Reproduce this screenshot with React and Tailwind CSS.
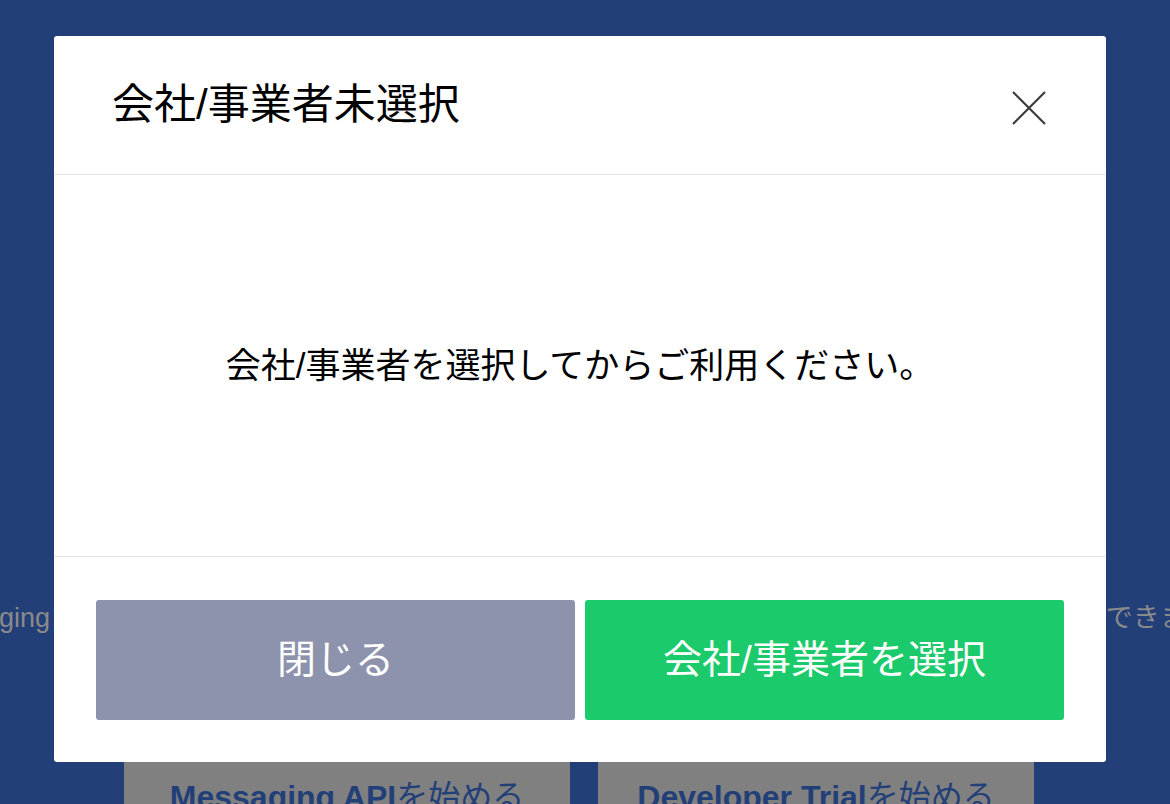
import React from 'react'

const FONT = { fontFamily: '"Liberation Sans", "Noto Sans CJK JP", sans-serif' }

export default function App(){
  return (
    <div className="relative w-[1170px] h-[804px] overflow-hidden bg-[#233f78]" style={FONT}>
      {/* page behind the overlay */}
      <div className="pt-[596px]">
        <div className="flex items-center justify-between whitespace-nowrap text-[27px] leading-[45px] text-[#8a8a8a]">
          <span className="-ml-[1px]">ging</span>
          <span className="shrink-0 -mr-[68px]">できます。</span>
        </div>
        <div className="mt-[99px] flex">
          <div className="ml-[124px] w-[446px] h-[100px] bg-[#808080] pt-[35px] text-center text-[32px] leading-[45px] font-bold text-[#233f78] whitespace-nowrap">
            Messaging API<span className="font-normal">を始める</span>
          </div>
          <div className="ml-[28px] w-[436px] h-[100px] bg-[#808080] pt-[35px] text-center text-[32px] leading-[45px] font-bold text-[#233f78] whitespace-nowrap">
            Developer Trial<span className="font-normal">を始める</span>
          </div>
        </div>
      </div>

      {/* modal */}
      <div className="absolute inset-0 pt-[36px] pl-[54px]">
        <div className="w-[1052px] bg-white rounded-[3px] flex flex-col">
          <div className="h-[139px] flex items-center justify-between pl-[58px] pr-[60px] border-b border-[#e3e3e3]">
            <h2 className="text-[42px] leading-none text-black">会社/事業者未選択</h2>
            <button className="mt-[5px] w-[34px] h-[34px] flex items-center justify-center">
              <svg width="34" height="34" viewBox="0 0 34 34" fill="none" stroke="#3c3c3c" strokeWidth="2.2">
                <path d="M1 1L33 33M33 1L1 33"/>
              </svg>
            </button>
          </div>
          <div className="h-[381px] flex items-center justify-center">
            <p className="text-[35px] leading-none text-black">会社/事業者を選択してからご利用ください。</p>
          </div>
          <div className="border-t border-[#e3e3e3] px-[42px] pt-[43px] pb-[42px] flex gap-[10px]">
            <button className="flex-1 h-[120px] rounded-[3px] bg-[#8e93ad] text-white text-[39px]">閉じる</button>
            <button className="flex-1 h-[120px] rounded-[3px] bg-[#1bca6b] text-white text-[39px]">会社/事業者を選択</button>
          </div>
        </div>
      </div>
    </div>
  )
}
